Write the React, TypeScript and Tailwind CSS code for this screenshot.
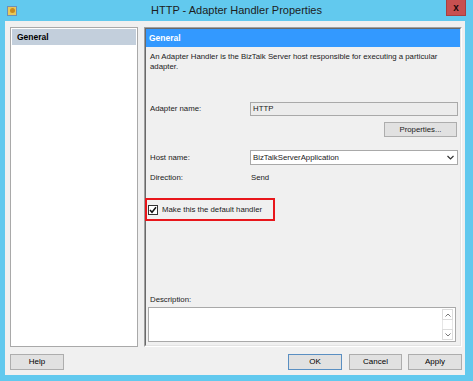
import React from "react";

const font = { fontFamily: '"Liberation Sans", Arial, sans-serif' };

function Btn({ label, w, def }: { label: string; w: string; def?: boolean }) {
  return (
    <div
      className={`${w} h-[16px] flex items-center justify-center bg-[#e1e1e1] border ${
        def ? "border-[#5a8fc2]" : "border-[#adadad]"
      } text-[8px] text-black`}
    >
      {label}
    </div>
  );
}

export default function App() {
  return (
    <div className="w-[473px] h-[381px] bg-[#62c9ee] flex flex-col overflow-hidden" style={font}>
      {/* title bar */}
      <div className="h-[21px] flex items-center relative shrink-0">
        <div className="ml-[7px] w-[10px] h-[10px] bg-[#e8c85a] border border-[#6f8fb3] flex items-center justify-center">
          <div className="w-[5px] h-[5px] rounded-full bg-[#c98a1e]" />
        </div>
        <div className="flex-1 text-center text-[11px] text-[#1c1c1c] -ml-[17px]">
          HTTP - Adapter Handler Properties
        </div>
        <div className="absolute right-[7px] top-0 w-[20px] h-[16px] bg-[#c75050] border border-[#a83f3f] border-t-0 flex items-center justify-center">
          <span className="text-[10px] font-bold text-[#1a0a0a] leading-none">x</span>
        </div>
      </div>

      {/* body */}
      <div className="ml-[5px] mr-[8px] mb-[6px] flex-1 bg-[#f0f0f0] flex flex-col pt-[6px] pl-[5px] pr-[3px] pb-[5px]">
        <div className="flex gap-[6px] h-[320px]">
          {/* left list */}
          <div className="w-[128px] border border-[#a9a9a9] bg-white p-px">
            <div className="h-[16px] bg-[#c3cfdc] flex items-center pl-[5px] text-[8.5px] font-bold text-black">
              General
            </div>
          </div>

          {/* right panel */}
          <div className="flex-1 border border-t-[#a0a0a0] border-l-[#a0a0a0] border-r-white border-b-white flex">
            <div className="flex-1 border border-t-[#696969] border-l-[#696969] border-r-[#e3e3e3] border-b-[#e3e3e3] flex flex-col">
              <div className="h-[18px] bg-[#3399ff] flex items-center pl-[3px] text-[8.5px] font-bold text-white">
                General
              </div>
              <div className="flex-1 flex flex-col px-[2px] text-[7.8px] text-[#1a1a1a]">
                <div className="mt-[5px] ml-[2px] leading-[10px]">
                  An Adapter Handler is the BizTalk Server host responsible for executing a particular
                  <br />
                  adapter.
                </div>

                <div className="mt-[30px] flex items-center h-[14px]">
                  <div className="w-[102px] pl-[2px]">Adapter name:</div>
                  <div className="w-[208px] h-[14px] bg-[#ececec] border border-[#a9a9a9] flex items-center pl-[2px]">
                    HTTP
                  </div>
                </div>

                <div className="mt-[6px] flex justify-end pr-[1px]">
                  <div className="w-[73px] h-[15px] bg-[#e1e1e1] border border-[#adadad] flex items-center justify-center">
                    Properties...
                  </div>
                </div>

                <div className="mt-[13px] flex items-center h-[15px]">
                  <div className="w-[102px] pl-[2px]">Host name:</div>
                  <div className="w-[208px] h-[15px] bg-white border border-[#a9a9a9] flex items-center pl-[2px] justify-between pr-[3px]">
                    <span>BizTalkServerApplication</span>
                    <svg width="7" height="5" viewBox="0 0 7 5">
                      <path d="M0.5 1 L3.5 4 L6.5 1" stroke="#333" strokeWidth="1.2" fill="none" />
                    </svg>
                  </div>
                </div>

                <div className="mt-[8px] flex items-center h-[10px]">
                  <div className="w-[102px] pl-[2px]">Direction:</div>
                  <div className="pl-[1px]">Send</div>
                </div>

                <div className="mt-[15px] -ml-[3px] w-[130px] h-[23px] border-2 border-[#e8161b] flex items-center pl-[1px]">
                  <div className="w-[10px] h-[10px] bg-white border border-[#333] flex items-center justify-center">
                    <svg width="8" height="8" viewBox="0 0 8 8">
                      <path d="M1 4 L3 6.3 L7 1.3" stroke="#111" strokeWidth="1.5" fill="none" />
                    </svg>
                  </div>
                  <div className="ml-[4px]">Make this the default handler</div>
                </div>

                <div className="flex-1" />

                <div className="ml-[2px] leading-[10px]">Description:</div>
                <div className="mt-[2px] mr-[2px] h-[35px] bg-white border border-[#a9a9a9] flex justify-end mb-[3px]">
                  <div className="w-[11px] mr-[2px] my-[1px] flex flex-col bg-[#f0f0f0]">
                    <div className="h-[11px] bg-white border border-[#dcdcdc] flex items-center justify-center">
                      <svg width="6" height="4" viewBox="0 0 6 4">
                        <path d="M0.5 3.5 L3 1 L5.5 3.5" stroke="#777" strokeWidth="1" fill="none" />
                      </svg>
                    </div>
                    <div className="flex-1 bg-white border-x border-[#e6e6e6]" />
                    <div className="h-[11px] bg-white border border-[#dcdcdc] flex items-center justify-center">
                      <svg width="6" height="4" viewBox="0 0 6 4">
                        <path d="M0.5 0.5 L3 3 L5.5 0.5" stroke="#777" strokeWidth="1" fill="none" />
                      </svg>
                    </div>
                  </div>
                </div>
              </div>
            </div>
          </div>
        </div>

        {/* buttons */}
        <div className="mt-[7px] flex items-center">
          <Btn label="Help" w="w-[54px]" />
          <div className="flex-1" />
          <Btn label="OK" w="w-[54px]" def />
          <div className="w-[7px]" />
          <Btn label="Cancel" w="w-[53px]" />
          <div className="w-[6px]" />
          <Btn label="Apply" w="w-[54px]" />
        </div>
      </div>
    </div>
  );
}
